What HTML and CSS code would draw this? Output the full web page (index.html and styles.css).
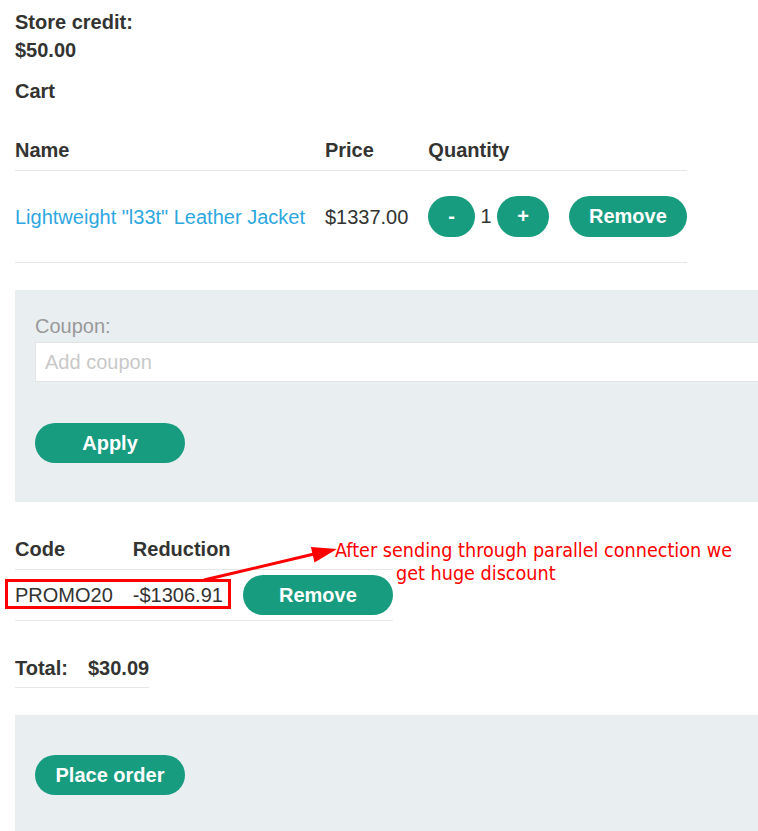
FILE: index.html
```html
<!DOCTYPE html>
<html lang="en">
<head>
<meta charset="utf-8">
<title>Cart</title>
<link rel="stylesheet" href="styles.css">
</head>
<body>
<div class="page">
  <p class="credit">Store credit:<br>$50.00</p>
  <p class="cart-title">Cart</p>

  <table class="grid cart-table">
    <thead>
      <tr><th>Name</th><th>Price</th><th>Quantity</th><th></th></tr>
    </thead>
    <tbody>
      <tr class="item-row">
        <td><a class="item-link" href="#">Lightweight "l33t" Leather Jacket</a></td>
        <td>$1337.00</td>
        <td><button class="btn btn-qty">-</button> 1 <button class="btn btn-qty">+</button></td>
        <td><button class="btn btn-qty">Remove</button></td>
      </tr>
    </tbody>
  </table>

  <section class="panel coupon-panel">
    <label class="coupon-label" for="coupon">Coupon:</label>
    <input class="coupon-input" id="coupon" type="text" placeholder="Add coupon">
    <button class="btn btn-wide apply-btn">Apply</button>
  </section>

  <table class="grid code-table">
    <thead>
      <tr><th>Code</th><th colspan="2">Reduction</th></tr>
    </thead>
    <tbody>
      <tr class="code-row">
        <td>PROMO20</td>
        <td>-$1306.91</td>
        <td><button class="btn btn-wide">Remove</button></td>
      </tr>
    </tbody>
  </table>

  <table class="grid total-table">
    <tbody>
      <tr><th>Total:</th><th>$30.09</th></tr>
    </tbody>
  </table>

  <section class="panel order-panel">
    <button class="btn btn-wide">Place order</button>
  </section>

  <div class="mark-box"></div>
  <svg class="mark-arrow" width="743" height="831" viewBox="0 0 743 831" aria-hidden="true">
    <line x1="189" y1="580" x2="299" y2="554" stroke="#ff0000" stroke-width="3"/>
    <polygon points="322,549 295.9,546.9 299.5,562.5" fill="#ff0000"/>
  </svg>
  <div class="mark-note">
    <span class="note-line">After sending through parallel connection we</span>
    <span class="note-line note-line-2">get huge discount</span>
  </div>
</div>
</body>
</html>
```

FILE: styles.css
```css
html, body {
  margin: 0;
  padding: 0;
  background: #ffffff;
  overflow: hidden;
}

body {
  font-family: "Liberation Sans", Arial, Helvetica, sans-serif;
  font-size: 20px;
  line-height: 28px;
  color: #333332;
}

.page {
  position: relative;
  padding: 8px 0 0 15px;
  min-height: 823px;
  overflow: hidden;
}

.credit,
.cart-title {
  margin: 0;
  font-weight: bold;
}

.cart-title {
  margin-top: 13px;
}

.grid {
  border-collapse: collapse;
  border-spacing: 0;
}

.grid th,
.grid td {
  text-align: left;
  vertical-align: middle;
  padding: 0 20px 0 0;
  white-space: nowrap;
}

.grid th:last-child,
.grid td:last-child {
  padding-right: 0;
}

.grid thead th {
  font-weight: bold;
  padding-top: 8px;
  padding-bottom: 6px;
  border-bottom: 1px solid #e6e6e6;
}

.cart-table {
  margin-top: 23px;
}

.item-row td {
  padding-top: 25px;
  padding-bottom: 25px;
  border-bottom: 1px solid #e6e6e6;
}

.item-link {
  color: #2ea7df;
  text-decoration: none;
}

.btn {
  display: inline-block;
  vertical-align: middle;
  font-family: "Liberation Sans", Arial, Helvetica, sans-serif;
  font-size: 20px;
  font-weight: bold;
  color: #ffffff;
  background: #179c80;
  border: 0;
  border-radius: 25px;
  height: 40px;
  line-height: 40px;
  padding: 0 20px;
  margin: 0;
  cursor: pointer;
}

.btn-qty {
  height: 41px;
  line-height: 41px;
  vertical-align: baseline;
}

.btn-wide {
  min-width: 150px;
}

.panel {
  background: #e9eef1;
  overflow: hidden;
}

.coupon-panel {
  margin-top: 27px;
  padding: 22px 20px 39px 20px;
}

.coupon-label {
  display: block;
  color: #999999;
}

.coupon-input {
  display: block;
  box-sizing: border-box;
  width: calc(100% + 40px);
  height: 40px;
  margin: 2px 0 0 0;
  padding: 0 9px;
  border: 1px solid #e2e4e5;
  background: #ffffff;
  font-family: "Liberation Sans", Arial, Helvetica, sans-serif;
  font-size: 20px;
  color: #333332;
  outline: none;
}

.coupon-input::placeholder {
  color: #c9c9c9;
}

.apply-btn {
  display: block;
  margin-top: 41px;
}

.code-table {
  margin-top: 25px;
}

.code-row td {
  padding-top: 5px;
  padding-bottom: 5px;
  border-bottom: 1px solid #e6e6e6;
}

.total-table {
  margin-top: 25px;
}

.total-table th {
  font-weight: bold;
  padding-top: 8px;
  padding-bottom: 5px;
  border-bottom: 1px solid #e6e6e6;
}

.order-panel {
  margin-top: 27px;
  padding: 40px 20px 60px 20px;
}

.mark-box {
  position: absolute;
  left: 5px;
  top: 579px;
  width: 220px;
  height: 24px;
  border: 3px solid #ff0000;
}

.mark-arrow {
  position: absolute;
  left: 15px;
  top: 0;
  pointer-events: none;
}

.mark-note {
  position: absolute;
  left: 335px;
  top: 539px;
  color: #ff0000;
  font-family: "DejaVu Sans Condensed", "DejaVu Sans", sans-serif;
  font-size: 19.6px;
  line-height: 23px;
  white-space: nowrap;
}

.note-line {
  display: block;
}

.note-line-2 {
  padding-left: 61px;
}
```
